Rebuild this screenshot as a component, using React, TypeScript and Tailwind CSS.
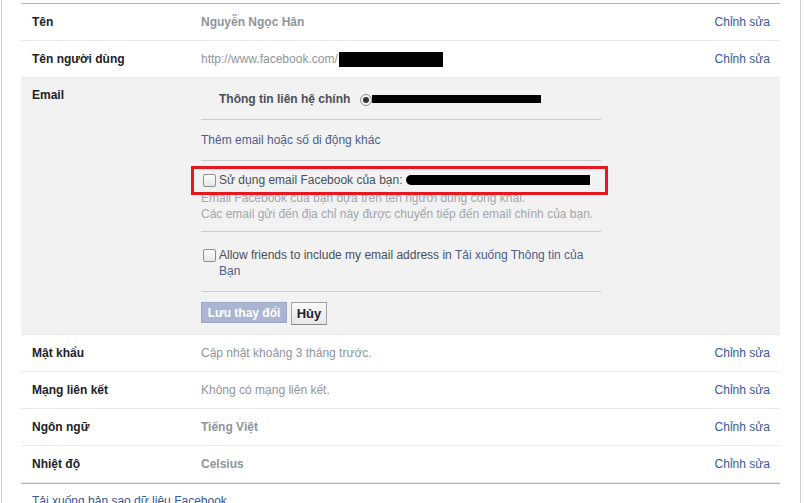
import React from "react";

type Row = {
  label: string;
  value: React.ReactNode;
};

const Checkbox = () => (
  <span className="inline-block w-[13px] h-[13px] shrink-0 rounded-[2px] border border-[#8e8f8f] bg-gradient-to-b from-[#fdfdfd] to-[#e6e6e6]" />
);

const Radio = () => (
  <span className="inline-flex items-center justify-center w-[12px] h-[12px] rounded-full border border-[#8e8f8f] bg-[#f3f3f3]">
    <span className="w-[6px] h-[6px] rounded-full bg-[#333]" />
  </span>
);

const SettingRow = ({ label, value }: Row) => (
  <div className="flex items-center h-[37px] border-b border-[#e9eaed]">
    <div className="w-[180px] pl-[11px] font-bold text-[#1d2129]">{label}</div>
    <div className="flex-1 text-[#90949c]">{value}</div>
    <a className="pr-[10px] text-[#365899]">Chỉnh sửa</a>
  </div>
);

const EmailSection = () => (
  <div className="flex bg-[#f2f2f2] border-b border-[#e9eaed]">
    <div className="w-[180px] pl-[11px] pt-[9px] leading-4 font-bold text-[#1d2129]">
      Email
    </div>
    <div className="w-[400px]">
      <div className="h-[42px] pt-[12px] border-b border-[#cccccc]">
        <div className="flex items-center h-[18px] pl-[18px]">
          <span className="font-bold text-[#4b4f56]">Thông tin liên hệ chính</span>
          <span className="ml-[10px]">
            <Radio />
          </span>
          <span className="w-[169px] h-[8px] bg-black" />
        </div>
      </div>
      <div className="h-[41px] pt-[12px] border-b border-[#cccccc] leading-4 text-[#4e5d8d]">
        Thêm email hoặc số di động khác
      </div>
      <div className="relative h-[71px] pt-[11px] border-b border-[#cccccc] leading-4">
        <div className="flex items-center h-[16px] pl-[2px]">
          <Checkbox />
          <span className="ml-[3px] text-[#4b4f56]">Sử dụng email Facebook của bạn:</span>
          <span className="ml-[4px] w-[184px] h-[10px] rounded-l-full bg-black" />
        </div>
        <div className="mt-[2px] text-[#a2a6ad]">
          Email Facebook của bạn dựa trên tên người dùng công khai.
          <br />
          Các email gửi đến địa chỉ này được chuyển tiếp đến email chính của bạn.
        </div>
        <div className="absolute left-[-10px] top-[5px] w-[417px] h-[29px] border-[3px] border-[#e8161f]" />
      </div>
      <div className="h-[60px] pt-[15px] border-b border-[#cccccc] leading-4">
        <div className="flex pl-[2px]">
          <span className="pt-[2px]">
            <Checkbox />
          </span>
          <p className="ml-[3px] text-[#4b4f56]">
            Allow friends to include my email address in{" "}
            <a className="text-[#4e5d8d]">Tải xuống Thông tin của Bạn</a>
          </p>
        </div>
      </div>
      <div className="h-[42px] pt-[10px] flex items-start gap-[4px]">
        <button className="h-[21px] w-[86px] border border-[#9ea9c6] bg-[#a9b5d3] text-white font-bold text-[12px] leading-none">
          Lưu thay đổi
        </button>
        <button className="h-[23px] w-[36px] border border-[#a3a3a3] border-b-[#8a8a8a] bg-gradient-to-b from-[#fafafa] to-[#e7e7e7] text-[#1d2129] font-bold text-[13px] leading-none">
          Hủy
        </button>
      </div>
    </div>
  </div>
);

export default function App() {
  return (
    <div
      className="w-[804px] h-[503px] overflow-hidden bg-white text-[12px]"
      style={{ fontFamily: '"Liberation Sans", Arial, sans-serif' }}
    >
      <div className="ml-[1px] w-[800px] h-[503px] border-l border-r border-[#cfcfcf] pl-[19px] pr-[20px] pt-[3px]">
        <div className="border-t border-[#b4b4b4]">
          <SettingRow
            label="Tên"
            value={<span className="font-bold">Nguyễn Ngọc Hân</span>}
          />
          <SettingRow
            label="Tên người dùng"
            value={
              <span className="flex items-center">
                http://www.facebook.com/
                <span className="ml-[1px] w-[104px] h-[15px] bg-black" />
              </span>
            }
          />
          <EmailSection />
          <SettingRow label="Mật khẩu" value="Cập nhật khoảng 3 tháng trước." />
          <SettingRow label="Mạng liên kết" value="Không có mạng liên kết." />
          <SettingRow
            label="Ngôn ngữ"
            value={<span className="font-bold">Tiếng Việt</span>}
          />
          <div className="border-b border-[#b4b4b4]">
            <SettingRow
              label="Nhiệt độ"
              value={<span className="font-bold">Celsius</span>}
            />
          </div>
        </div>
        <div className="pl-[11px] pt-[9px] leading-4 text-[#365899]">
          Tải xuống bản sao dữ liệu Facebook
        </div>
      </div>
    </div>
  );
}
